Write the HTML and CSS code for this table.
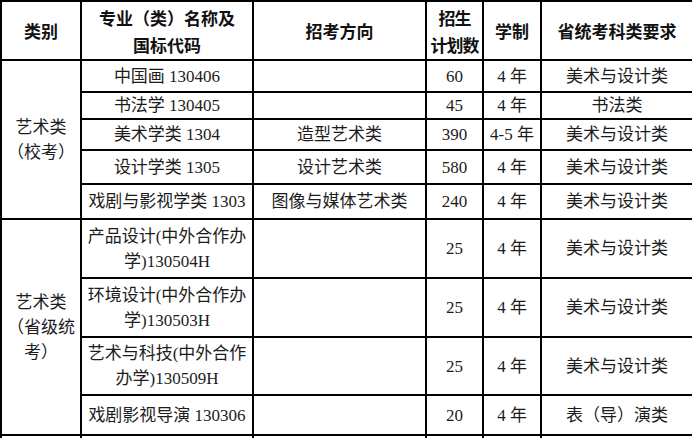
FILE: index.html
```html
<!DOCTYPE html>
<html lang="zh-CN">
<head>
<meta charset="utf-8">
<link rel="stylesheet" href="styles.css">
</head>
<body>
<table class="plan">
  <colgroup>
    <col class="c1"><col class="c2"><col class="c3"><col class="c4"><col class="c5"><col class="c6">
  </colgroup>
  <thead>
    <tr class="h-head">
      <th>类别</th>
      <th>专业（类）名称及<br>国标代码</th>
      <th>招考方向</th>
      <th class="narrow">招生<br>计划数</th>
      <th>学制</th>
      <th>省统考科类要求</th>
    </tr>
  </thead>
  <tbody>
    <tr class="h-r1">
      <td rowspan="5" class="cat cat1">艺术类<br>（校考）</td>
      <td>中国画 130406</td><td></td><td>60</td><td>4 年</td><td>美术与设计类</td>
    </tr>
    <tr class="h-r2">
      <td>书法学 130405</td><td></td><td>45</td><td>4 年</td><td>书法类</td>
    </tr>
    <tr class="h-r3">
      <td>美术学类 1304</td><td>造型艺术类</td><td>390</td><td>4-5 年</td><td>美术与设计类</td>
    </tr>
    <tr class="h-r4">
      <td>设计学类 1305</td><td>设计艺术类</td><td>580</td><td>4 年</td><td>美术与设计类</td>
    </tr>
    <tr class="h-r5">
      <td>戏剧与影视学类 1303</td><td>图像与媒体艺术类</td><td>240</td><td>4 年</td><td>美术与设计类</td>
    </tr>
    <tr class="h-r6">
      <td rowspan="4" class="cat">艺术类<br>（省级统<br>考）</td>
      <td>产品设计(中外合作办<br>学)130504H</td><td></td><td>25</td><td>4 年</td><td>美术与设计类</td>
    </tr>
    <tr class="h-r7">
      <td>环境设计(中外合作办<br>学)130503H</td><td></td><td>25</td><td>4 年</td><td>美术与设计类</td>
    </tr>
    <tr class="h-r8">
      <td>艺术与科技(中外合作<br>办学)130509H</td><td></td><td>25</td><td>4 年</td><td>美术与设计类</td>
    </tr>
    <tr class="h-r9">
      <td>戏剧影视导演 130306</td><td></td><td>20</td><td>4 年</td><td>表（导）演类</td>
    </tr>
    <tr class="h-r10">
      <td></td><td></td><td></td><td></td><td></td><td></td>
    </tr>
  </tbody>
</table>
</body>
</html>
```

FILE: styles.css
```css
html, body {
  margin: 0;
  padding: 0;
  background: #fff;
}
body {
  width: 692px;
  height: 438px;
  overflow: hidden;
  font-family: "Liberation Serif", "Noto Sans CJK SC", serif;
  color: #1c1c1c;
}
.plan {
  border-collapse: collapse;
  table-layout: fixed;
  width: 692px;
}
.c1 { width: 80px; }
.c2 { width: 172px; }
.c3 { width: 173px; }
.c4 { width: 57px; }
.c5 { width: 58px; }
.c6 { width: 152px; }
.plan th, .plan td {
  border: 2px solid #000;
  padding: 0 1px;
  text-align: center;
  vertical-align: middle;
  font-size: 17px;
  line-height: 25px;
  white-space: nowrap;
  overflow: hidden;
}
.plan th {
  font-family: "Noto Sans CJK SC", sans-serif;
  font-weight: bold;
  color: #111;
  line-height: 27px;
}
.plan th.narrow {
  letter-spacing: -1px;
}
.cat {
  line-height: 24px;
}
.h-head { height: 59px; }
.h-r1 { height: 32px; }
.h-r2 { height: 26px; }
.h-r3 { height: 31px; }
.h-r4 { height: 34px; }
.h-r5 { height: 35px; }
.h-r6 { height: 59px; }
.h-r7 { height: 59px; }
.h-r8 { height: 58px; }
.h-r9 { height: 40px; }
.h-r10 { height: 40px; }
```
